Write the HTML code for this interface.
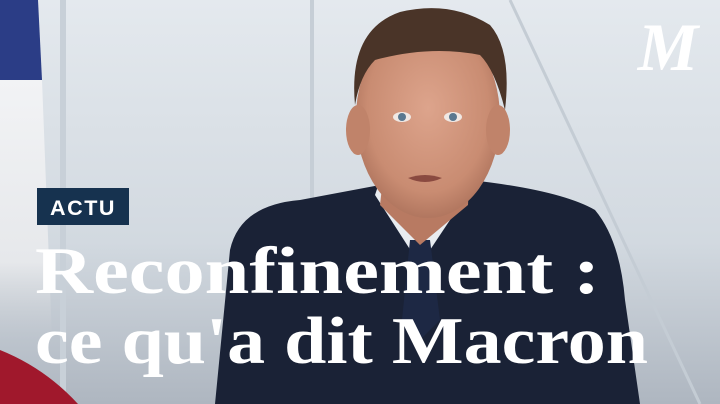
<!DOCTYPE html>
<html><head><meta charset="utf-8"><style>
html,body{margin:0;padding:0;width:720px;height:404px;overflow:hidden}
</style></head><body>
<svg width="720" height="404" viewBox="0 0 720 404" xmlns="http://www.w3.org/2000/svg">
<defs>
<linearGradient id="bg" x1="0" y1="0" x2="0" y2="1">
<stop offset="0" stop-color="#e4e9ee"/><stop offset="0.6" stop-color="#d2d9e0"/><stop offset="1" stop-color="#aeb6c0"/></linearGradient>
<linearGradient id="wf" x1="0" y1="0" x2="0" y2="1">
<stop offset="0" stop-color="#f2f3f5"/><stop offset="0.7" stop-color="#e6e8eb"/><stop offset="1" stop-color="#c8ccd2" stop-opacity="0"/></linearGradient>
<radialGradient id="face" cx="0.5" cy="0.45" r="0.6">
<stop offset="0" stop-color="#dda48c"/><stop offset="0.7" stop-color="#c98c72"/><stop offset="1" stop-color="#a86e58"/></radialGradient>
</defs>
<rect width="720" height="404" fill="url(#bg)"/>
<rect x="60" y="0" width="6" height="404" fill="#c8d0d8"/>
<rect x="310" y="0" width="4" height="240" fill="#c6ced6"/>
<path d="M510 0 Q580 150 700 404" stroke="#c4ccd4" stroke-width="3" fill="none"/>
<!-- flag -->
<path d="M0 0 H38 L42 80 H0Z" fill="#2b3d86"/>
<path d="M0 80 H42 L52 340 H0Z" fill="url(#wf)"/>
<path d="M0 350 Q45 368 78 404 H0Z" fill="#a0182c"/>
<!-- suit -->
<path d="M215 404 L230 250 Q240 205 300 200 L380 185 L470 180 Q560 190 595 210 Q620 240 625 300 L640 404Z" fill="#1a2236"/>
<!-- collar & tie -->
<path d="M375 195 L420 265 L470 190 L465 175 L380 180Z" fill="#e8ecf0"/>
<path d="M410 240 L430 240 L440 320 L420 340 L402 320Z" fill="#1d2844"/>
<!-- neck & face -->
<path d="M385 160 L470 160 L468 205 L420 245 L380 205Z" fill="#b87a62"/>
<ellipse cx="428" cy="118" rx="72" ry="100" fill="url(#face)"/>
<ellipse cx="358" cy="130" rx="12" ry="25" fill="#c0836a"/>
<ellipse cx="498" cy="130" rx="12" ry="25" fill="#c0836a"/>
<path d="M355 105 Q348 30 400 12 Q450 0 490 25 Q512 50 505 110 Q495 70 480 55 Q430 45 375 60 Q360 75 355 105Z" fill="#4a3428"/>
<ellipse cx="402" cy="117" rx="9" ry="5" fill="#f0e8e4"/><circle cx="402" cy="117" r="4" fill="#5a7890"/>
<ellipse cx="453" cy="117" rx="9" ry="5" fill="#f0e8e4"/><circle cx="453" cy="117" r="4" fill="#5a7890"/>
<path d="M408 178 Q425 172 442 178 Q425 186 408 178Z" fill="#8a4a40"/>
<!-- logo -->
<text x="668" y="70" text-anchor="middle" font-family="Liberation Serif,serif" font-weight="bold" font-style="italic" font-size="68" fill="#fff">M</text>
<!-- ACTU -->
<rect x="37" y="188" width="92" height="37" fill="#16324f"/>
<text x="83" y="215" text-anchor="middle" font-family="Liberation Sans,sans-serif" font-weight="bold" font-size="21" letter-spacing="1.5" fill="#fff" textLength="66" lengthAdjust="spacingAndGlyphs">ACTU</text>
<text x="35" y="293" font-family="Liberation Serif,serif" font-weight="bold" font-size="67" fill="#fff" textLength="565" lengthAdjust="spacingAndGlyphs">Reconfinement :</text>
<text x="35" y="363" font-family="Liberation Serif,serif" font-weight="bold" font-size="67" fill="#fff" textLength="613" lengthAdjust="spacingAndGlyphs">ce qu'a dit Macron</text>
</svg>
</body></html>
